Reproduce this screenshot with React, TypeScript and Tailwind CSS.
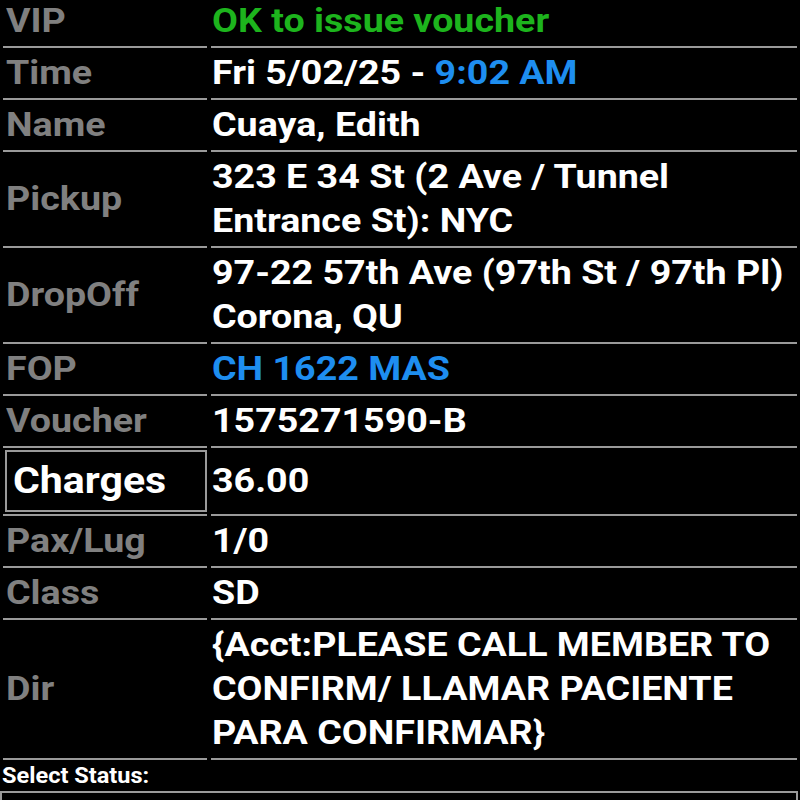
const rows: { label: string; value: React.ReactNode }[] = [
  { label: "VIP", value: <span className="text-[#1db41d]">OK to issue voucher</span> },
  {
    label: "Time",
    value: (
      <span>
        Fri 5/02/25 - <span className="text-[#1e8ef0]">9:02 AM</span>
      </span>
    ),
  },
  { label: "Name", value: "Cuaya, Edith" },
  { label: "Pickup", value: "323 E 34 St (2 Ave / Tunnel Entrance St): NYC" },
  { label: "DropOff", value: "97-22 57th Ave (97th St / 97th Pl) Corona, QU" },
  { label: "FOP", value: <span className="text-[#1e8ef0]">CH 1622 MAS</span> },
  { label: "Voucher", value: "1575271590-B" },
];

const rowsAfter: { label: string; value: React.ReactNode }[] = [
  { label: "Pax/Lug", value: "1/0" },
  { label: "Class", value: "SD" },
  {
    label: "Dir",
    value: "{Acct:PLEASE CALL MEMBER TO CONFIRM/ LLAMAR PACIENTE PARA CONFIRMAR}",
  },
];

// the source screen is a little wider than Roboto, so text is stretched sideways
const labelCls =
  "flex items-center border-b-2 border-[#9a9a9a] pl-[3px] py-[3px] text-[#808080]";
const valueCls =
  "flex items-center border-b-2 border-[#9a9a9a] pl-[1px] py-[3px] text-white";

const Wide = ({ children }: { children: React.ReactNode }) => (
  <span className="inline-block origin-left scale-x-[1.14] whitespace-nowrap">{children}</span>
);

const Row = ({ label, value }: { label: string; value: React.ReactNode }) => (
  <>
    <div className={labelCls}>
      <Wide>{label}</Wide>
    </div>
    <div className={valueCls}>
      <div className="w-[513px] origin-left scale-x-[1.14]">{value}</div>
    </div>
  </>
);

export default function App() {
  return (
    <div className="min-h-screen bg-black font-['Roboto',sans-serif] font-bold overflow-hidden">
      <div className="grid grid-cols-[204px_1fr] gap-x-1 px-[3px] -mt-[4px] text-[33px] leading-[44px]">
        {rows.map((r) => (
          <Row key={r.label} label={r.label} value={r.value} />
        ))}
        <div className="border-b-2 border-[#9a9a9a] py-[2px] pl-[2px]">
          <div className="border-2 border-[#9a9a9a] h-[62px] flex items-center pl-[6px] text-white text-[36px]">
            <Wide>Charges</Wide>
          </div>
        </div>
        <div className={valueCls}>
          <Wide>36.00</Wide>
        </div>
        {rowsAfter.map((r) => (
          <Row key={r.label} label={r.label} value={r.value} />
        ))}
      </div>
      <div className="text-white text-[22px] leading-[30px] pl-[2px] mt-[1px]">
        <span className="inline-block origin-left scale-x-[1.07]">Select Status:</span>
      </div>
      <div className="border-2 border-[#9a9a9a] h-12 mr-[2px]"></div>
    </div>
  );
}
